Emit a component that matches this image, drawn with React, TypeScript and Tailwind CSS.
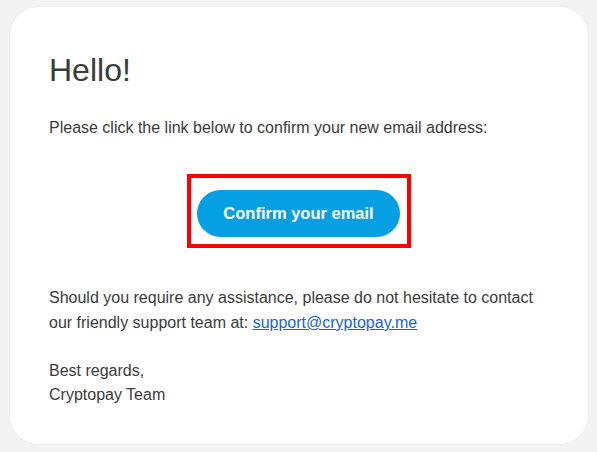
export default function App() {
  return (
    <div
      className="w-[597px] h-[452px] bg-[#f3f3f3] pt-[6px] pl-[9px] pr-[8px] pb-[7px]"
      style={{ fontFamily: '"Liberation Sans", Arial, sans-serif' }}
    >
      <div className="h-full rounded-[30px] bg-white border border-[#efefef] pl-[39px] pr-[30px] pt-[45px] text-[#3b3b3b]">
        <h1 className="text-[32px] leading-[36px] font-normal">Hello!</h1>
        <p className="mt-[28px] text-[16px] leading-[24px]">
          Please click the link below to confirm your new email address:
        </p>
        <div className="mt-[34px] flex justify-center pr-[9px]">
          <div className="border-[4.5px] border-[#ff0000] pt-[12px] pb-[7px] pl-[6px] pr-[7px]">
            <a className="flex items-center justify-center w-[203px] h-[47px] rounded-full bg-[#059fe4] text-white text-[16.5px] font-bold">
              Confirm your email
            </a>
          </div>
        </div>
        <p className="mt-[37px] text-[16px] leading-[25px]">
          Should you require any assistance, please do not hesitate to contact
          <br />
          our friendly support team at:{" "}
          <a className="text-[#1a62d6] underline">support@cryptopay.me</a>
        </p>
        <p className="mt-[24px] text-[16px] leading-[24px]">
          Best regards,
          <br />
          Cryptopay Team
        </p>
      </div>
    </div>
  );
}
